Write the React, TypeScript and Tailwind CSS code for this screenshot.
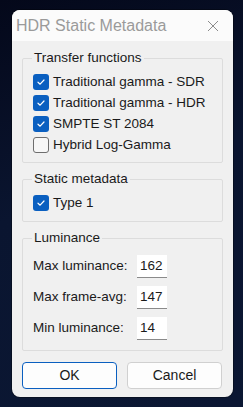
import React from "react";

var FONT = "font-['Liberation_Sans',Arial,sans-serif]";

function Check({ checked }: { checked: boolean }) {
  if (!checked) {
    return <span className="w-4 h-4 rounded-[3px] border border-[#6e6e6e] bg-[#f7f7f7] shrink-0" />;
  }
  return (
    <span className="w-4 h-4 rounded-[3px] bg-[#0a5fc0] shrink-0 flex items-center justify-center">
      <svg width="10" height="10" viewBox="0 0 10 10" fill="none">
        <path d="M2 5.2 L4.1 7.2 L8 3" stroke="white" strokeWidth="1.2" strokeLinecap="round" strokeLinejoin="round" />
      </svg>
    </span>
  );
}

function CheckRow({ label, checked }: { label: string; checked: boolean }) {
  return (
    <div className="h-[21px] flex items-center gap-[4px] whitespace-nowrap">
      <Check checked={checked} />
      <span className="text-[13.5px] leading-none text-[#1a1a1a]">{label}</span>
    </div>
  );
}

function Group({ title, children, className }: { title: string; children: React.ReactNode; className: string }) {
  return (
    <fieldset className={"border border-[#dcdcdc] rounded-[2px] px-[10px] " + className}>
      <legend className="ml-[-1px] px-[2px] text-[13.5px] leading-[20px] text-[#1a1a1a] whitespace-nowrap">{title}</legend>
      {children}
    </fieldset>
  );
}

function NumRow({ label, value }: { label: string; value: string }) {
  return (
    <div className="h-[23px] flex items-center whitespace-nowrap">
      <span className="w-[104px] text-[13.5px] text-[#1a1a1a]">{label}</span>
      <span className="w-[30px] h-[23px] bg-white border-b border-[#8a8a8a] pl-[3px] flex items-center text-[13.5px] text-[#1a1a1a]">{value}</span>
    </div>
  );
}

export default function App() {
  return (
    <div className={"w-[243px] h-[407px] overflow-hidden pt-[10px] pl-[12px] bg-[linear-gradient(160deg,#04081a_0%,#0a1530_45%,#0b1733_100%)] " + FONT}>
      <div className="w-[221px] h-[387px] rounded-[8px] overflow-hidden bg-[#f0f0f0] flex flex-col shadow-[0_0_0_1px_rgba(0,0,0,0.3)]">
        <div className="h-[31px] bg-[#fbfbfb] flex items-center justify-between pl-[4px] pr-[14px] shrink-0">
          <span className="text-[16px] text-[#9a9a9a] whitespace-nowrap">HDR Static Metadata</span>
          <svg width="12" height="12" viewBox="0 0 12 12">
            <path d="M1 1 L11 11 M11 1 L1 11" stroke="#8c8c8c" strokeWidth="1" />
          </svg>
        </div>
        <div className="px-[10px] pt-[7px] flex flex-col">
          <Group title="Transfer functions" className="pt-[3px] pb-[7px]">
            <CheckRow label="Traditional gamma - SDR" checked={true} />
            <CheckRow label="Traditional gamma - HDR" checked={true} />
            <CheckRow label="SMPTE ST 2084" checked={true} />
            <CheckRow label="Hybrid Log-Gamma" checked={false} />
          </Group>
          <Group title="Static metadata" className="mt-[6px] pt-[3px] pb-[8px]">
            <CheckRow label="Type 1" checked={true} />
          </Group>
          <Group title="Luminance" className="mt-[6px] pt-[7px] pb-[10px] flex flex-col gap-[8px]">
            <NumRow label="Max luminance:" value="162" />
            <NumRow label="Max frame-avg:" value="147" />
            <NumRow label="Min luminance:" value="14" />
          </Group>
          <div className="mt-[11px] flex gap-[10px]">
            <button className="w-[95px] h-[27px] rounded-[4px] bg-[#fdfdfd] border border-[#0a5fc0] text-[14px] text-[#1a1a1a]">OK</button>
            <button className="w-[95px] h-[27px] rounded-[4px] bg-[#fdfdfd] border border-[#d0d0d0] text-[14px] text-[#1a1a1a]">Cancel</button>
          </div>
        </div>
      </div>
    </div>
  );
}
